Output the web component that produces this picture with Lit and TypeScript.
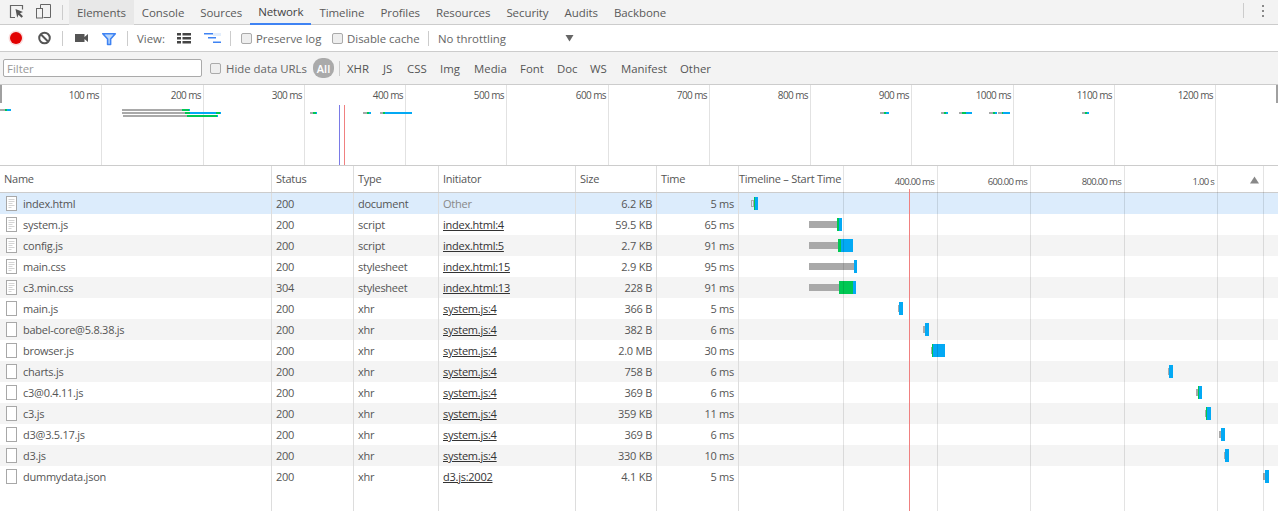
import { LitElement, html, css, svg } from "lit";
import { customElement } from "lit/decorators.js";

const GRAY = "#a9a9a9", GREEN = "#00c853", BLUE = "#03a9f4";
const TABS = ["Elements", "Console", "Sources", "Network", "Timeline", "Profiles", "Resources", "Security", "Audits", "Backbone"];
const TYPES = ["XHR", "JS", "CSS", "Img", "Media", "Font", "Doc", "WS", "Manifest", "Other"];
const OV_LINES: [number, string][] = [[101, "100 ms"], [203, "200 ms"], [304, "300 ms"], [405, "400 ms"], [506, "500 ms"], [608, "600 ms"], [709, "700 ms"], [810, "800 ms"], [911, "900 ms"], [1013, "1000 ms"], [1114, "1100 ms"], [1215, "1200 ms"]];
const OV_BARS: [number, number, number, number, number][] = [
  [109, 0, 5, 7, 11], [109, 122, 182, 189, 190], [112, 122, 185, 190, 216], [112, 216, 216, 220, 221], [115, 123, 187, 217, 218],
  [112, 310, 313, 316, 317], [112, 363, 367, 369, 371], [112, 380, 383, 385, 412], [112, 880, 884, 886, 889], [112, 941, 944, 946, 948],
  [112, 959, 962, 966, 972], [112, 989, 993, 995, 997], [112, 998, 1002, 1003, 1010], [112, 1082, 1085, 1087, 1089],
];
type Req = { n: string; doc: boolean; st: string; ty: string; ini: string; sz: string; t: string; w: [number, number, number, number] };
const R = (n: string, doc: boolean, st: string, ty: string, ini: string, sz: string, t: string, w: [number, number, number, number]): Req => ({ n, doc, st, ty, ini, sz, t, w });
const ROWS: Req[] = [
  R("index.html", true, "200", "document", "Other", "6.2 KB", "5 ms", [751, 754, 755, 758]),
  R("system.js", true, "200", "script", "index.html:4", "59.5 KB", "65 ms", [809, 837, 839, 842]),
  R("config.js", true, "200", "script", "index.html:5", "2.7 KB", "91 ms", [809, 838, 841, 853]),
  R("main.css", true, "200", "stylesheet", "index.html:15", "2.9 KB", "95 ms", [809, 854, 854, 857]),
  R("c3.min.css", true, "304", "stylesheet", "index.html:13", "228 B", "91 ms", [809, 839, 853, 856]),
  R("main.js", false, "200", "xhr", "system.js:4", "366 B", "5 ms", [898, 899, 899, 903]),
  R("babel-core@5.8.38.js", false, "200", "xhr", "system.js:4", "382 B", "6 ms", [923, 925, 925, 929]),
  R("browser.js", false, "200", "xhr", "system.js:4", "2.0 MB", "30 ms", [931, 932, 933, 945]),
  R("charts.js", false, "200", "xhr", "system.js:4", "758 B", "6 ms", [1168, 1169, 1169, 1173]),
  R("c3@0.4.11.js", false, "200", "xhr", "system.js:4", "369 B", "6 ms", [1196, 1198, 1199, 1202]),
  R("c3.js", false, "200", "xhr", "system.js:4", "359 KB", "11 ms", [1205, 1206, 1207, 1211]),
  R("d3@3.5.17.js", false, "200", "xhr", "system.js:4", "369 B", "6 ms", [1219, 1221, 1221, 1225]),
  R("d3.js", false, "200", "xhr", "system.js:4", "330 KB", "10 ms", [1224, 1225, 1225, 1229]),
  R("dummydata.json", false, "200", "xhr", "d3.js:2002", "4.1 KB", "5 ms", [1263, 1265, 1265, 1269]),
];
const TICKS: [number, string][] = [[843, ""], [937, "400.00 ms"], [1030, "600.00 ms"], [1124, "800.00 ms"], [1217, "1.00 s"], [1263, ""]];
const WF_X = 739;

@customElement("app-root")
export class AppRoot extends LitElement {
  static styles = css`
    :host { display: flex; flex-direction: column; height: 511px; width: 1278px; overflow: hidden; background: #fff; color: #555; font: 11px "Open Sans", "Noto Sans", sans-serif; }
    svg { display: block; flex: none; }
    .tabs { display: flex; height: 24px; background: #f3f3f3; border-bottom: 1px solid #ccc; align-items: stretch; flex: none; }
    .icons { display: flex; align-items: center; width: 69px; flex: none; }
    .sep { width: 1px; background: #ccc; flex: none; height: 15px; }
    .tab { padding: 0 8px; display: flex; align-items: center; color: #5a5a5a; font-size: 11.5px; letter-spacing: -0.08px; margin-bottom: -1px; border-bottom: 1px solid transparent; }
    .tab.sel { background: #e8e8e8; }
    .tab.net { border-bottom: 2px solid #3f83f3; color: #444; }
    .spacer { flex: 1; }
    .kebab { display: flex; flex-direction: column; gap: 3px; width: 34px; box-sizing: border-box; padding: 0 0 2px 3px; align-items: center; justify-content: center; }
    .kebab i { width: 2px; height: 2px; background: #666; border-radius: 50%; }
    .topsep { margin-top: 3px; }
    .bar { display: flex; align-items: center; flex: none; border-bottom: 1px solid #ccc; }
    .toolbar { height: 26px; background: #fff; font-size: 11.4px; }
    .filterbar { height: 32px; background: #f3f3f3; font-size: 11.4px; }
    .tool { color: #666; white-space: nowrap; }
    .view { margin-left: 9px; width: 30px; }
    .throttle { margin-left: 9px; width: 127px; }
    .check { display: flex; align-items: center; gap: 5px; color: #666; white-space: nowrap; }
    .preserve { margin-left: 10px; width: 91px; gap: 4px; }
    .disable { width: 96px; gap: 4px; }
    .hide { margin-left: 8px; width: 102px; }
    .box { width: 9px; height: 9px; border: 1px solid #aaa; border-radius: 2px; background: #eee; flex: none; }
    .input { width: 194px; height: 16px; border: 1px solid #aaa; border-radius: 2px; background: #fff; color: #999; padding-left: 3px; line-height: 18px; margin-left: 3px; flex: none; }
    .pill { background: #aaa; color: #fff; border-radius: 9px; width: 21px; height: 20px; margin-left: 1px; display: flex; align-items: center; justify-content: center; font-weight: 600; font-size: 11px; flex: none; }
    .filtersep { margin-left: 5px; margin-right: 7px; }
    .type { color: #555; flex: none; }
    .overview { position: relative; height: 80px; flex: none; border-bottom: 1px solid #ccc; background: #fff; }
    .ovl { position: absolute; top: 0; bottom: 0; width: 1px; background: #e2e2e2; }
    .ovt { position: absolute; top: 3px; width: 60px; text-align: right; font-size: 10px; letter-spacing: -0.6px; color: #555; line-height: 14px; white-space: nowrap; }
    .ovb { position: absolute; height: 2px; }
    .handle { position: absolute; top: 0; width: 2px; height: 18px; background: #a0a0a0; }
    .handle.l { left: 0; }
    .handle.rt { right: 0; }
    .vline { position: absolute; top: 20px; bottom: 0; width: 1px; }
    .vline.dcl { left: 339px; background: #7a7ae6; }
    .vline.load { left: 344px; background: #f08080; }
    .table { position: relative; flex: 1; display: flex; flex-direction: column; min-height: 0; letter-spacing: -0.25px; }
    .row { display: grid; grid-template-columns: 272px 82px 85px 137px 81px 82px 1fr; height: 21px; flex: none; }
    .row.head { height: 26px; border-bottom: 1px solid #ccc; }
    .row.fill { flex: 1; }
    .row.alt { background: #f4f4f4; }
    .row.sel { background: #dcecfc; }
    .c { border-right: 1px solid #ddd; padding: 0 4px; display: flex; align-items: center; min-width: 0; white-space: nowrap; color: #555; }
    .c.r { justify-content: flex-end; }
    .c.last { border-right: 0; padding: 0; position: relative; }
    .head .c { padding-bottom: 2px; }
    .name { gap: 6px; padding-left: 6px; }
    .link { text-decoration: underline; color: #333; }
    .muted { color: #888; }
    .wf { position: absolute; }
    .hollow { box-sizing: border-box; border: 1px solid #a9a9a9; }
    .layer { position: absolute; top: 0; bottom: 0; left: 739px; right: 0; pointer-events: none; }
    .tick { position: absolute; top: 0; bottom: 0; width: 1px; background: rgba(0, 0, 0, .11); }
    .tl { position: absolute; top: 9px; width: 70px; text-align: right; font-size: 9.5px; letter-spacing: -0.7px; line-height: 14px; color: #555; white-space: nowrap; }
    .red { position: absolute; top: 23px; bottom: 0; left: 170px; width: 1px; background: #f08080; }
    .sort { position: absolute; left: 511px; top: 10px; }
  `;

  private fileIcon(doc: boolean) {
    return html`<svg width="11" height="15" viewBox="0 0 11 15">
      <rect x=".5" y=".5" width="10" height="14" fill="#fff" stroke="#a8a8a8"/>
      ${doc ? svg`<path d="M2.500 3.500h6M2.500 5.500h6M2.500 7.500h4M2.500 9.500h6M2.500 11.500h3" stroke="#d4d4d4" fill="none"/>` : ""}
    </svg>`;
  }

  private wfBar(w: [number, number, number, number], hollow: boolean) {
    const [a, b, c, d] = w;
    const seg = (x0: number, x1: number, col: string, top: number, h: number, cls = "") =>
      x1 > x0 ? html`<div class="wf ${cls}" style="left:${x0 - WF_X}px;width:${x1 - x0}px;top:${top}px;height:${h}px;background:${col}"></div>` : "";
    return html`${hollow ? seg(a, b, "transparent", 7, 7, "hollow") : seg(a, b, GRAY, 7, 7)}${seg(b, c, GREEN, 4, 13)}${seg(c, d, BLUE, 4, 13)}`;
  }

  render() {
    return html`
      <div class="tabs">
        <div class="icons">
          <svg width="62" height="24" viewBox="0 0 62 24">
            <path d="M15 17.500h-4.500v-12h12v4" fill="none" stroke="#666" stroke-width="1.2"/>
            <path d="M15.500 9l7.500 3-3 1.300 3 3-1.500 1.500-3-3-1.300 3z" fill="#555"/>
            <path d="M40.500 8V4.500h10v13h-7" fill="none" stroke="#666"/>
            <rect x="36.500" y="8.500" width="6" height="9.500" fill="none" stroke="#666"/>
          </svg>
          <div class="sep"></div>
        </div>
        ${TABS.map((t) => html`<div class="tab ${t === "Elements" ? "sel" : t === "Network" ? "net" : ""}">${t}</div>`)}
        <div class="spacer"></div>
        <div class="sep topsep"></div>
        <div class="kebab"><i></i><i></i><i></i></div>
      </div>

      <div class="bar toolbar">
        <svg width="62" height="26" viewBox="0 0 62 26">
          <circle cx="16" cy="13" r="7.500" fill="#fbdcdc"/>
          <circle cx="16" cy="13" r="6" fill="#e20000"/>
          <circle cx="44.500" cy="13" r="5.300" fill="none" stroke="#555" stroke-width="2"/>
          <path d="M41 9.500l7 7" stroke="#555" stroke-width="2"/>
        </svg>
        <div class="sep"></div>
        <svg width="64" height="26" viewBox="63 0 64 26">
          <path d="M75 9h9.500v3l3.500-3v8l-3.500-3v3H75z" fill="#555"/>
          <path d="M102.800 8.700h12.500l-4.700 5.300v5.500h-3V14z" fill="#bcd8fa" stroke="#3f83f3" stroke-width="1.600" stroke-linejoin="round"/>
        </svg>
        <div class="sep"></div>
        <span class="tool view">View:</span>
        <svg width="63" height="26" viewBox="167 0 63 26">
          <path d="M177 8h4v2.500h-4zM182.500 8h8.500v2.500h-8.500zM177 12h4v2.500h-4zM182.500 12h8.500v2.500h-8.500zM177 16h4v2.500h-4zM182.500 16h8.500v2.500h-8.500z" fill="#444"/>
          <rect x="213" y="8" width="8" height="3" fill="#e3eefc"/>
          <path d="M204 8h9v1.600h-9zM208 12h8v1.600h-8zM213 16.400h8v1.600h-8z" fill="#3f83f3"/>
        </svg>
        <div class="sep"></div>
        <label class="check preserve"><span class="box"></span>Preserve log</label>
        <label class="check disable"><span class="box"></span>Disable cache</label>
        <div class="sep"></div>
        <span class="tool throttle">No throttling</span>
        <svg width="9" height="8" viewBox="0 0 9 8"><path d="M.500 1h8l-4 6.500z" fill="#666"/></svg>
      </div>

      <div class="bar filterbar">
        <div class="input">Filter</div>
        <label class="check hide"><span class="box"></span>Hide data URLs</label>
        <div class="pill">All</div>
        <div class="sep filtersep"></div>
        ${TYPES.map((t, i) => html`<span class="type" style="width:${[36, 24, 33, 34, 46, 37, 33, 31, 59, 40][i]}px">${t}</span>`)}
      </div>

      <div class="overview">
        ${OV_LINES.map(([x, l]) => html`<div class="ovl" style="left:${x}px"></div><div class="ovt" style="left:${x - 62}px">${l}</div>`)}
        ${OV_BARS.map(([y, a, b, c, d]) => html`
          ${b > a ? html`<div class="ovb" style="top:${y - 85}px;left:${a}px;width:${b - a}px;background:${GRAY}"></div>` : ""}
          ${c > b ? html`<div class="ovb" style="top:${y - 85}px;left:${b}px;width:${c - b}px;background:${GREEN}"></div>` : ""}
          ${d > c ? html`<div class="ovb" style="top:${y - 85}px;left:${c}px;width:${d - c}px;background:${BLUE}"></div>` : ""}`)}
        <div class="vline dcl"></div>
        <div class="vline load"></div>
        <div class="handle l"></div>
        <div class="handle rt"></div>
      </div>

      <div class="table">
        <div class="row head">
          ${["Name", "Status", "Type", "Initiator", "Size", "Time"].map((h) => html`<div class="c">${h}</div>`)}
          <div class="c last">Timeline – Start Time</div>
        </div>
        ${ROWS.map((r, i) => html`
          <div class="row ${i === 0 ? "sel" : i % 2 === 0 ? "alt" : ""}">
            <div class="c name">${this.fileIcon(r.doc)}<span>${r.n}</span></div>
            <div class="c">${r.st}</div>
            <div class="c">${r.ty}</div>
            <div class="c"><span class="${r.ini === "Other" ? "muted" : "link"}">${r.ini}</span></div>
            <div class="c r">${r.sz}</div>
            <div class="c r">${r.t}</div>
            <div class="c last">${this.wfBar(r.w, i === 0)}</div>
          </div>`)}
        <div class="row fill">
          <div class="c"></div><div class="c"></div><div class="c"></div><div class="c"></div><div class="c"></div><div class="c"></div><div class="c last"></div>
        </div>
        <div class="layer">
          ${TICKS.map(([x, l]) => html`<div class="tick" style="left:${x - WF_X}px"></div>${l ? html`<div class="tl" style="left:${x - WF_X - 73}px">${l}</div>` : ""}`)}
          <div class="red"></div>
          <svg class="sort" width="9" height="8" viewBox="0 0 9 8"><path d="M4.500 .5L9 7.500H0z" fill="#888"/></svg>
        </div>
      </div>
    `;
  }
}
